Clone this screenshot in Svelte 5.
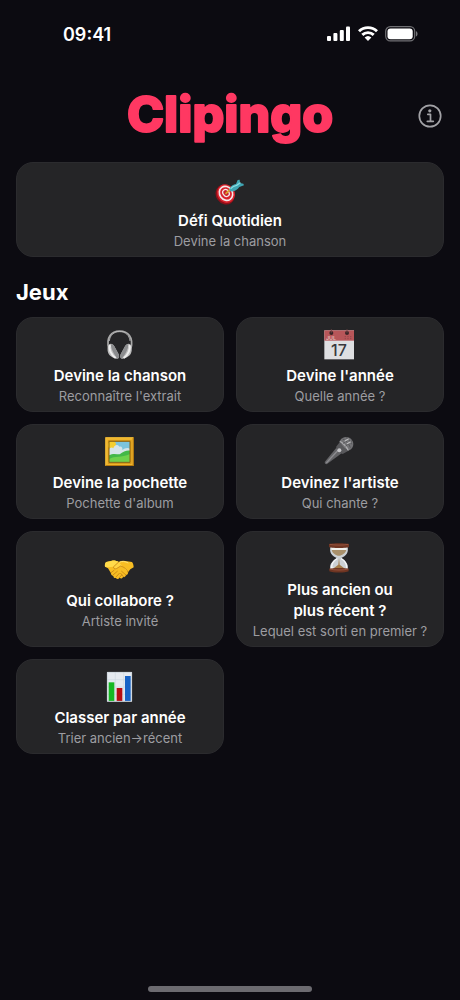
<!-- Home screen: daily challenge and list of games -->
<script lang="ts">
  interface Game {
    icon: string;
    title: string;
    subtitle: string;
  }

  const daily: Game = { icon: 'target', title: 'Défi Quotidien', subtitle: 'Devine la chanson' };

  const games: Game[] = [
    { icon: 'headphones', title: 'Devine la chanson', subtitle: "Reconnaître l'extrait" },
    { icon: 'calendar', title: "Devine l'année", subtitle: 'Quelle année ?' },
    { icon: 'picture', title: 'Devine la pochette', subtitle: "Pochette d'album" },
    { icon: 'mic', title: "Devinez l'artiste", subtitle: 'Qui chante ?' },
    { icon: 'handshake', title: 'Qui collabore ?', subtitle: 'Artiste invité' },
    { icon: 'hourglass', title: 'Plus ancien ou plus récent ?', subtitle: 'Lequel est sorti en premier ?' },
    { icon: 'chart', title: 'Classer par année', subtitle: 'Trier ancien→récent' },
  ];
</script>

{#snippet gameIcon(name: string)}
  {#if name === 'target'}
    <svg class="emoji" viewBox="42 9 96 96" aria-hidden="true">
      <ellipse cx="75" cy="71" rx="27" ry="31" fill="#8d0f18" transform="rotate(-35 75 71)" />
      <ellipse cx="78" cy="68" rx="26" ry="29" fill="#d8222c" transform="rotate(-35 78 68)" />
      <ellipse cx="78" cy="67" rx="19" ry="22" fill="none" stroke="#f3e9e9" stroke-width="5" transform="rotate(-35 78 67)" />
      <ellipse cx="78" cy="66" rx="9" ry="11" fill="#c9202a" stroke="#f3e9e9" stroke-width="4" transform="rotate(-35 78 66)" />
      <path d="M78 67 96 50" stroke="#d9a62c" stroke-width="5" stroke-linecap="round" />
      <path d="M88 56c1-8 10-16 20-17l5-12 6-1 1 10 10 2 2 5-14 5c-5 9-19 15-27 13z" fill="#3fa6b4" />
      <path d="M93 52c4-5 11-8 17-9l10-7" fill="none" stroke="#8bdde2" stroke-width="4" stroke-linecap="round" />
    </svg>
  {:else if name === 'headphones'}
    <svg class="emoji" viewBox="42 24 96 96" aria-hidden="true">
      <path d="M56 82C48 48 64 30 89 30s42 18 34 52" fill="none" stroke="#a9a9a9" stroke-width="5" />
      <path d="M58 60c2-18 14-28 31-28s29 10 31 28" fill="none" stroke="#d8d8d8" stroke-width="2" />
      <path d="M57 71c5-5 12-2 16 5l13 24c3 7 1 13-4 13-9 1-22-6-27-16-4-9-3-20 2-26z" fill="#bdbdbd" />
      <path d="M63 70c4-1 8 2 10 6l13 24c3 7 1 13-4 13-3-3-21-30-19-43z" fill="#8b8c8e" />
      <path d="M60 72c-5 11 4 31 17 39" fill="none" stroke="#eeeeee" stroke-width="6" />
      <path d="M121 71c-5-5-12-2-16 5l-13 24c-3 7-1 13 4 13 9 1 22-6 27-16 4-9 3-20-2-26z" fill="#bdbdbd" />
      <path d="M115 70c-4-1-8 2-10 6l-13 24c-3 7-1 13 4 13 3-3 21-30 19-43z" fill="#8b8c8e" />
      <path d="M118 72c5 11-4 31-17 39" fill="none" stroke="#eeeeee" stroke-width="6" />
    </svg>
  {:else if name === 'calendar'}
    <svg class="emoji" viewBox="42 24 96 96" aria-hidden="true">
      <path d="M43 28h89v87H43z" fill="#dedfe1" />
      <path d="M43 28h89v31H43z" fill="#b75659" />
      <circle cx="64" cy="36" r="6" fill="#3b2527" />
      <circle cx="111" cy="36" r="6" fill="#3b2527" />
      <path d="M64 25v10M111 25v10" stroke="#77484a" stroke-width="3" />
      <text x="48" y="57" class="month">JUL</text>
      <path d="M104 47h4m4 0h4m-12 6h4m4 0h4m4-6h4m-4 6h4" stroke="#94484b" stroke-width="3" />
      <text x="87" y="105" class="day" text-anchor="middle">17</text>
    </svg>
  {:else if name === 'picture'}
    <svg class="emoji" viewBox="42 24 96 96" aria-hidden="true">
      <path d="M46 28h85v86H46z" fill="#d99a17" />
      <path d="M46 28h85l-7 7H53v72l-7 7z" fill="#f4c13b" />
      <path d="M131 28v86H46l8-7h70V35z" fill="#b87a0d" />
      <path d="M51 33h75v76H51z" fill="none" stroke="#efb52d" stroke-width="4" />
      <path d="M57 40h63v63H57z" fill="#7cc4dc" />
      <circle cx="66" cy="51" r="12" fill="#f5cf2f" />
      <path d="M57 65c3-7 9-8 13-4 2-9 12-14 18-5 8-2 10 5 9 10 7-7 17-8 23-4v22H57z" fill="#d6e5e9" />
      <path d="M57 82c12-7 23-3 32-3 10-8 20-12 31-11v35H57z" fill="#43b848" />
      <path d="M57 94c18-13 36-3 63-16v25H57z" fill="#6ed14c" />
      <path d="M57 40h63v63H57z" fill="none" stroke="#8b6313" stroke-width="3" />
    </svg>
  {:else if name === 'mic'}
    <svg class="emoji" viewBox="42 24 96 96" aria-hidden="true">
      <path d="m79 59 17 16-46 34-5-2-1-5z" fill="#636366" />
      <path d="m81 62 4 4-36 39" fill="none" stroke="#8c8c90" stroke-width="4" />
      <path d="m78 57 12-16 24 28-16 9c-8-2-16-11-20-21z" fill="#59595c" />
      <path d="M90 38c6-13 25-15 34-4 10 11 7 26-6 33-11-2-25-16-28-29z" fill="#727275" />
      <path d="M89 40c7 2 23 18 26 28" fill="none" stroke="#aaaaad" stroke-width="4" />
      <path d="M98 33c9 3 21 16 23 26M108 29c7 3 14 11 17 20M99 47l18-16M106 55l20-17" stroke="#49494c" stroke-width="2" fill="none" />
      <path d="m105 39 10-6M112 47l9-5" stroke="#bcbcbe" stroke-width="4" stroke-linecap="round" />
      <circle cx="88" cy="67" r="6" fill="#c4c4c7" />
    </svg>
  {:else if name === 'handshake'}
    <svg class="emoji" viewBox="42 24 96 96" aria-hidden="true">
      <path d="M49 48 66 44c8-1 14 1 20 4 8-5 17-5 25-2l15 2c3 3 5 10 5 16l-10 6-7 9c1 5-2 8-6 8-1 5-5 7-9 6-2 5-7 6-10 2-4 5-9 5-11 1-5 1-8-2-8-6-5-1-7-4-7-8l-9-15-9-5c-1-6 0-11 4-14z" fill="#f7bd23" />
      <path d="M49 48 66 44c8-1 14 1 20 4L71 62l-17 2-9-2c-1-6 0-11 4-14z" fill="#ffdb4b" />
      <path d="m86 48-15 14c-2 5 3 8 8 6l13-8c10 3 20 10 22 19" fill="#ffd442" />
      <path d="m86 48-15 14c-2 5 3 8 8 6l13-8c10 3 20 10 22 19M63 80l9-7m-2 13 12-10m-4 17 10-11m0 13 7-8m0-11 13 11M92 82l9 11" fill="none" stroke="#b97510" stroke-width="2" stroke-linecap="round" />
      <path d="M88 49c8-4 18-3 27 2" fill="none" stroke="#ffe376" stroke-width="3" />
    </svg>
  {:else if name === 'hourglass'}
    <svg class="emoji" viewBox="42 21 96 96" aria-hidden="true">
      <path d="M61 32c-3 18 3 26 21 35-18 10-24 19-21 35h52c3-16-3-25-21-35 18-9 24-17 21-35z" fill="#cbd0d4" />
      <path d="M65 40h44c0 9-7 15-19 19h-7c-12-4-18-10-18-19z" fill="#a8906b" />
      <path d="M64 36h46v6H64z" fill="#f1f1ec" />
      <path d="M82 67c-12 7-18 16-17 29l8 2M93 67c12 7 18 16 17 29" fill="none" stroke="#f4f6f8" stroke-width="4" />
      <path d="m87 66 2 20 18 14H67l18-14z" fill="#a37b48" />
      <path d="M57 25c3-4 57-4 60 0v8c-4 4-56 4-60 0z" fill="#6f3522" />
      <path d="M59 25c14 3 42 3 56 0" fill="none" stroke="#a76148" stroke-width="2" />
      <path d="M58 98c13-3 45-3 58 0v8c-9 5-49 5-58 0z" fill="#6f3522" />
      <path d="M59 99c14 4 42 4 56 0" fill="none" stroke="#a76148" stroke-width="2" />
    </svg>
  {:else}
    <svg class="emoji" viewBox="42 27 96 96" aria-hidden="true">
      <path d="M51 30h75v89H51z" fill="#e5eaf0" />
      <path d="M51 53h75M51 75h75M51 97h75M76 30v89M101 30v89" stroke="#cfd9e2" stroke-width="2" />
      <path d="M56 61h17v56H56z" fill="#16b823" />
      <path d="M80 78h17v39H80z" fill="#b70d12" />
      <path d="M105 42h17v75h-17z" fill="#1763c6" />
      <path d="M52 31h73v87H52z" fill="none" stroke="#c3cbd3" stroke-width="2" />
    </svg>
  {/if}
{/snippet}

{#snippet card(game: Game)}
  <button class="card" type="button">
    <span class="icon">{@render gameIcon(game.icon)}</span>
    <span class="title">{game.title}</span>
    <span class="subtitle">{game.subtitle}</span>
  </button>
{/snippet}

<div class="screen">
  <div class="status">
    <time>09:41</time>
    <div class="indicators">
      <svg width="24" height="16" viewBox="0 0 24 16" fill="#fff" aria-hidden="true">
        <rect x="0" y="10" width="4" height="5" rx="1" />
        <rect x="6.4" y="7" width="4" height="8" rx="1" />
        <rect x="12.8" y="4" width="4" height="11" rx="1" />
        <rect x="19" y="0.5" width="4" height="14.5" rx="1" />
      </svg>
      <svg width="20" height="16" viewBox="0 0 20 16" aria-hidden="true">
        <g fill="none" stroke="#fff" stroke-width="2.9">
          <path d="M1 5.2a13 13 0 0 1 18 0" />
          <path d="M4.3 8.9a8.2 8.2 0 0 1 11.4 0" />
        </g>
        <path d="M6.6 11.6a5 5 0 0 1 6.8 0L10 15z" fill="#fff" />
      </svg>
      <svg width="33" height="16" viewBox="0 0 33 16" aria-hidden="true">
        <rect x="0.7" y="0.7" width="29" height="14.2" rx="4.6" fill="none" stroke="#707074" stroke-width="1.2" />
        <rect x="2.5" y="2.4" width="25.2" height="10.8" rx="3" fill="#fff" />
        <path d="M31 5.2c2 .6 2 4.6 0 5.2z" fill="#77777b" />
      </svg>
    </div>
  </div>

  <header>
    <h1>
      <svg class="logo" width="216" height="60" viewBox="0 0 216 60">
        <text x="108" y="46" text-anchor="middle">Clipingo</text>
      </svg>
    </h1>
    <button class="info" type="button" aria-label="Informations">
      <svg width="24" height="24" viewBox="0 0 24 24" fill="none" stroke="#a2a2a6" aria-hidden="true">
        <circle cx="12" cy="12" r="10.7" stroke-width="1.7" />
        <circle cx="11.8" cy="6.8" r="1.6" fill="#a2a2a6" stroke="none" />
        <path d="M9.8 10.3h2.7v6.9M9.3 17.3h6" stroke-width="1.7" stroke-linecap="round" stroke-linejoin="round" />
      </svg>
    </button>
  </header>

  <main>
    {@render card(daily)}
    <h2>Jeux</h2>
    <div class="grid">
      {#each games as game}
        {@render card(game)}
      {/each}
    </div>
  </main>

  <div class="home-indicator"></div>
</div>

<style>
:global(body) {
  margin: 0;
  background: #0c0b11;
}
.screen {
  box-sizing: border-box;
  min-height: 100vh;
  display: flex;
  flex-direction: column;
  padding: 0 16px 8px;
  background: #0c0b11;
  color: #fff;
  font-family: Inter, "Liberation Sans", sans-serif;
}
.status {
  display: flex;
  align-items: center;
  justify-content: space-between;
  height: 68px;
  padding: 0 26px 0 47px;
}
.status time {
  font-size: 18px;
  font-weight: 600;
}
.indicators {
  display: flex;
  gap: 7px;
}
header {
  display: grid;
  grid-template-columns: 1fr auto 1fr;
  align-items: center;
  height: 92px;
  padding-top: 2px;
}
h1 {
  grid-column: 2;
  margin: 0;
}
.logo {
  display: block;
  overflow: visible;
}
.logo text {
  font-size: 50px;
  font-weight: 800;
  fill: #ff3862;
  stroke: #ff3862;
  stroke-width: 2px;
  stroke-linejoin: round;
}
.info {
  justify-self: end;
  display: flex;
  margin-right: 2px;
  padding: 0;
  border: 0;
  background: none;
}
h2 {
  margin: 20px 0 10px;
  font-size: 22px;
  font-weight: 700;
  line-height: 30px;
}
.grid {
  display: grid;
  grid-template-columns: 1fr 1fr;
  gap: 12px;
}
.card {
  box-sizing: border-box;
  width: 100%;
  display: flex;
  flex-direction: column;
  align-items: center;
  justify-content: center;
  gap: 1px;
  padding: 8px 8px 6px;
  border: 1px solid #2b2b2e;
  border-radius: 17px;
  background: #252527;
  color: #fff;
  font-family: inherit;
  text-align: center;
}
.icon {
  display: flex;
  align-items: center;
  height: 38px;
}
.emoji {
  width: 32px;
  height: 32px;
}
.month {
  font-size: 16px;
  font-weight: 600;
  fill: #e0b9ba;
}
.day {
  font-size: 48px;
  font-weight: 500;
  fill: #38383b;
}
.title {
  font-size: 15px;
  font-weight: 600;
  line-height: 21px;
  text-wrap: balance;
}
.subtitle {
  color: #9d9da1;
  font-size: 13px;
  line-height: 18px;
}
.home-indicator {
  width: 164px;
  height: 6px;
  margin: auto auto 0;
  border-radius: 3px;
  background: #6c6b70;
}
</style>
